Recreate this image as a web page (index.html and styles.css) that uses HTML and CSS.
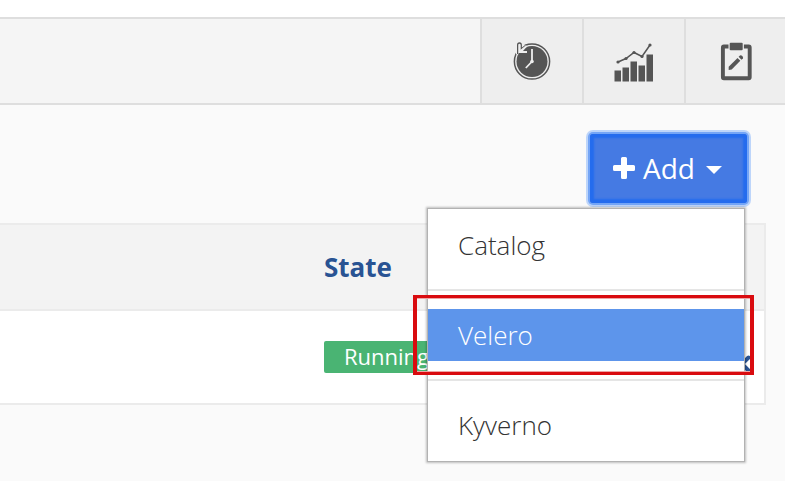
FILE: index.html
```html
<!DOCTYPE html>
<html lang="en">
<head>
<meta charset="utf-8">
<title>Add-ons</title>
<link rel="stylesheet" href="styles.css">
</head>
<body>
<header class="topbar">
  <div class="tool">
    <svg width="40" height="42" viewBox="0 0 40 42">
      <circle cx="20" cy="21.500" r="17.600" fill="#eee" stroke="#555" stroke-width="1.500"/>
      <circle cx="20" cy="21.500" r="15.500" fill="#555"/>
      <path d="M20 9V21.500L13.800 28" fill="none" stroke="#eee" stroke-width="1.800"/>
      <circle cx="20" cy="21.500" r="1.800" fill="#eee"/>
      <path d="M4 14.500V3H9L15 6L11 11Z" fill="#eee"/>
      <path d="M5.700 14V5Q5.700 3 7.500 3Q9.200 3 9.200 5V9L13.500 5.500" fill="none" stroke="#555" stroke-width="1.400"/>
      <path d="M7.500 4.500V12H15M8 11.500L14 6.500" fill="none" stroke="#eee" stroke-width="1.800"/>
    </svg>
  </div>
  <div class="tool">
    <svg width="40" height="42" viewBox="0 0 40 42">
      <path d="M.5 30.500h6.500v11H.5zM8.500 27.500H15v14H8.500zM16.500 21.500H23v20h-6.500zM24.500 25.500H31v16h-6.500zM32.500 14.500H39v27h-6.500z" fill="#555"/>
      <path d="M4 22L12 18.500L20 12.500L28 16.500L36 5" fill="none" stroke="#555" stroke-width="1.500"/>
      <g fill="#555"><circle cx="4" cy="22" r="1.600"/><circle cx="12" cy="18.500" r="1.600"/><circle cx="20" cy="12.500" r="1.600"/><circle cx="28" cy="16.500" r="1.600"/><circle cx="36" cy="5" r="1.600"/></g>
    </svg>
  </div>
  <div class="tool">
    <svg width="40" height="42" viewBox="0 0 40 42">
      <rect x="6.900" y="6.500" width="26.800" height="31.700" rx="1" fill="none" stroke="#555" stroke-width="3.900"/>
      <rect x="12.500" y="1.500" width="15.400" height="10" fill="#eee"/>
      <rect x="13.700" y="2.700" width="13" height="7.500" rx="1" fill="#555"/>
      <path d="M12.700 30V26.700L21.500 17.900L24.300 20.700L15.700 29.600Z" fill="#555"/>
      <path d="M22.600 16.800L24 15.500Q25.200 15 26.300 16.100Q27.500 17.400 26.900 18.400L25.500 19.700Z" fill="#555"/>
    </svg>
  </div>
</header>
<main>
  <div class="actions">
    <button class="add"><svg width="22" height="22" viewBox="0 0 22 22"><path d="M9.500 0h3q1.500 0 1.500 1.500V8h6.500Q22 8 22 9.500v3q0 1.500-1.500 1.500H14v6.500q0 1.500-1.500 1.500h-3Q8 22 8 20.500V14H1.500Q0 14 0 12.500v-3Q0 8 1.500 8H8V1.500Q8 0 9.500 0Z" fill="#fff"/></svg><span>Add</span><i class="caret"></i></button>
    <div class="menu">
      <div class="item">Catalog</div>
      <div class="rule"></div>
      <div class="item active">Velero</div>
      <div class="rule"></div>
      <div class="item">Kyverno</div>
    </div>
    <div class="highlight"></div>
  </div>
  <section class="table">
    <div class="head">State</div>
    <div class="row"><span class="badge">Running</span><svg class="close" width="18" height="18" viewBox="0 0 18 18"><path d="M2.500 2.500L15.500 15.500M15.500 2.500L2.500 15.500" stroke="#295393" stroke-width="4" stroke-linecap="round"/></svg></div>
  </section>
</main>
</body>
</html>
```
FILE: styles.css
```css
* { box-sizing: border-box; }
body { margin: 0; height: 481px; padding-top: 17px; overflow: hidden; background: #fff; font-family: "Open Sans", sans-serif; }
.topbar { height: 88px; display: flex; justify-content: flex-end; background: #f5f5f5; border: solid #dedede; border-width: 2px 0; }
.tool { width: 102px; border-left: 2px solid #dedede; background: #eee; display: flex; align-items: center; justify-content: center; }
.tool:last-child { width: 101px; }
.tool svg { display: block; }
main { height: 376px; background: #fafafa; }
.actions { position: relative; height: 118px; padding: 29px 38px 0 0; display: flex; justify-content: flex-end; }
.add { width: 157px; height: 69px; padding: 0 0 1px 23px; border: 0; border-radius: 3px; background: #457ae3; color: #fff; font: 28px "Open Sans", sans-serif; display: flex; align-items: center; box-shadow: inset 0 0 2px 4px #246cee, 0 0 0 2px #74a5f6, 0 0 0 4px #bdd5fa; }
.add span { margin-left: 8px; }
.caret { margin: 4px 0 0 11px; border: solid transparent; border-width: 8px 8px 0; border-top-color: #fff; }
.menu { position: absolute; z-index: 2; left: 427px; top: 103px; width: 318px; height: 254px; padding-top: 10px; background: #fff; border: 1px solid #b2b2b2; box-shadow: 0 0 2px 1px rgba(0,0,0,.24); color: #333; font-size: 26px; font-weight: 300; }
.item { height: 52px; line-height: 52px; padding-left: 30px; }
.active { background: #5d95eb; color: #fff; }
.rule { height: 2px; margin: 18px 0; background: #e5e5e5; }
.highlight { position: absolute; z-index: 3; left: 413px; top: 190px; width: 341px; height: 80px; border: solid #d90b0f; border-width: 3px 4px; box-shadow: inset 0 1px #eda4a4, inset 0 -1px #eda4a4; }
.table { width: 766px; height: 182px; border: solid #ebebeb; border-width: 2px 2px 2px 0; background: #fff; }
.head { height: 86px; padding-left: 324px; border-bottom: 2px solid #ebebeb; background: #f3f3f3; color: #295393; font-size: 26px; font-weight: 700; line-height: 85px; }
.row { height: 92px; padding: 30px 13px 0 324px; display: flex; justify-content: space-between; }
.badge { height: 32px; padding: 0 20px; border-radius: 2px; background: #4ab473; color: #fff; font-size: 22px; line-height: 31px; }
.close { margin-top: 14px; }
```
